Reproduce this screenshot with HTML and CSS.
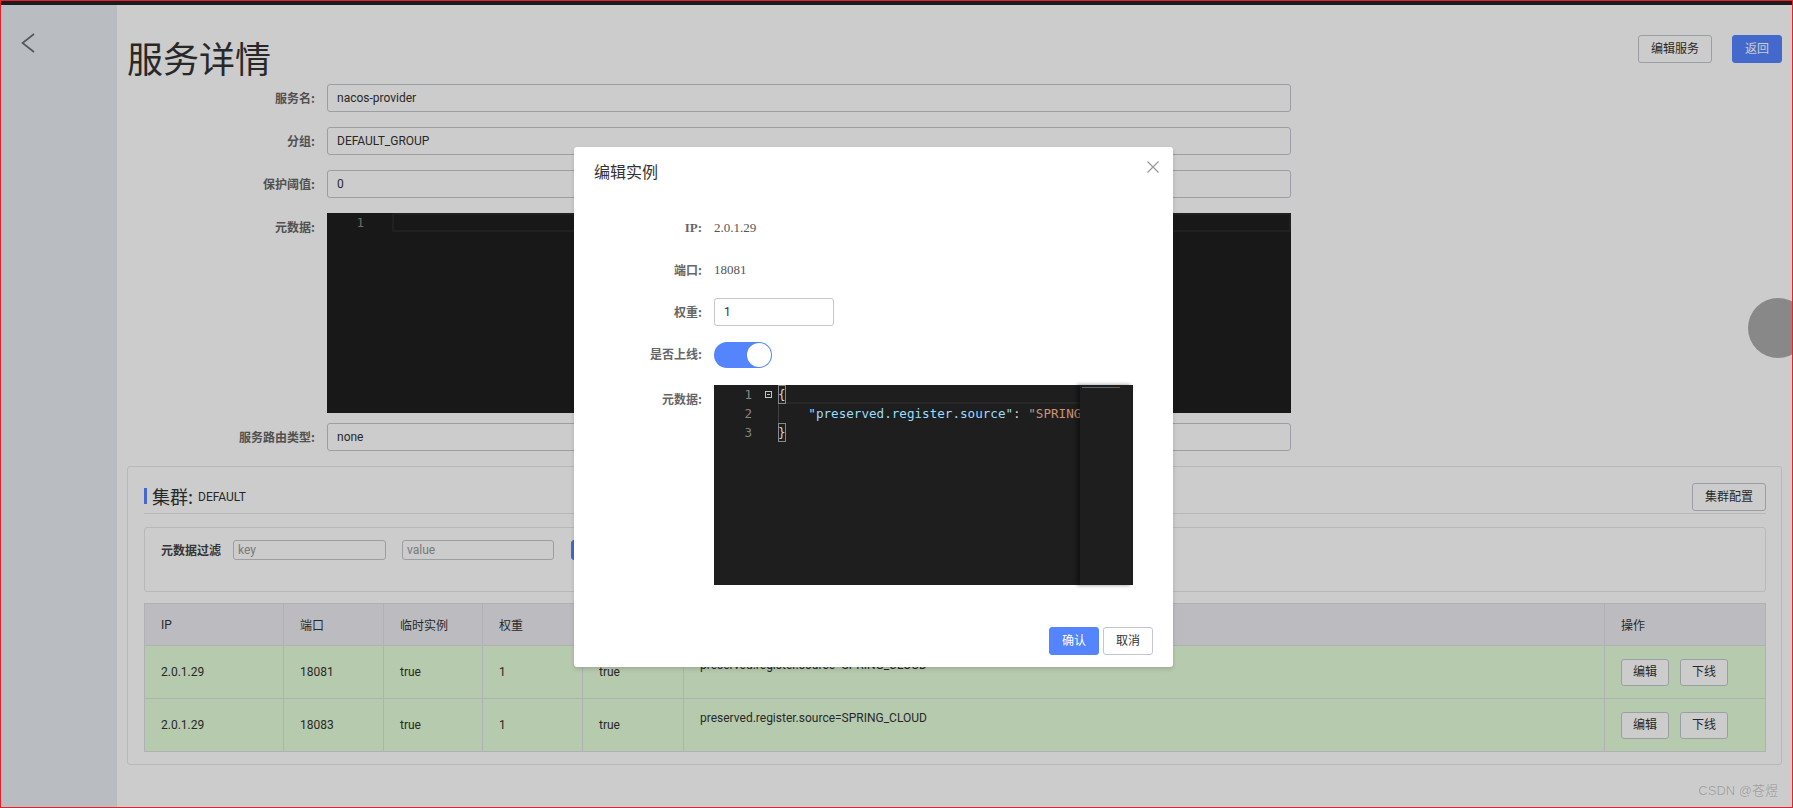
FILE: index.html
```html
<!DOCTYPE html>
<html lang="zh-CN">
<head>
<meta charset="utf-8">
<title>服务详情</title>
<link rel="stylesheet" href="styles.css">
</head>
<body>
<div class="frame">
  <div class="topbar"></div>
  <div class="app">
    <aside class="sidebar">
      <svg class="back" width="14" height="20" viewBox="0 0 14 20"><polyline points="13,1 1.5,10 13,19" fill="none" stroke="#666c75" stroke-width="1.6"/></svg>
    </aside>
    <main class="main">
      <div class="page-head">
        <h1 class="title">服务详情</h1>
        <div class="head-actions">
          <button class="btn">编辑服务</button>
          <button class="btn btn-primary">返回</button>
        </div>
      </div>
      <div class="form">
        <div class="form-row"><div class="form-label">服务名:</div><div class="input">nacos-provider</div></div>
        <div class="form-row"><div class="form-label">分组:</div><div class="input">DEFAULT_GROUP</div></div>
        <div class="form-row"><div class="form-label">保护阈值:</div><div class="input">0</div></div>
        <div class="form-row editor-row">
          <div class="form-label">元数据:</div>
          <div class="page-editor">
            <div class="pe-line"><span class="pe-ln">1</span><span class="pe-cur"></span></div>
          </div>
        </div>
        <div class="form-row last-row"><div class="form-label">服务路由类型:</div><div class="input">none</div></div>
      </div>

      <section class="cluster">
        <div class="cluster-head">
          <span class="cbar"></span>
          <span class="ctitle">集群:</span>
          <span class="cname">DEFAULT</span>
          <button class="btn btn-cfg">集群配置</button>
        </div>
        <div class="filter">
          <span class="filter-label">元数据过滤</span>
          <div class="finput">key</div>
          <div class="finput finput-value">value</div>
          <button class="btn-add">添加过滤</button>
        </div>
        <table class="inst-table">
          <colgroup>
            <col style="width:139px"><col style="width:100px"><col style="width:99px"><col style="width:100px"><col style="width:101px"><col><col style="width:161px">
          </colgroup>
          <thead>
            <tr><th>IP</th><th>端口</th><th>临时实例</th><th>权重</th><th>健康状态</th><th>元数据</th><th>操作</th></tr>
          </thead>
          <tbody>
            <tr>
              <td>2.0.1.29</td><td>18081</td><td>true</td><td>1</td><td>true</td>
              <td class="meta">preserved.register.source=SPRING_CLOUD</td>
              <td><button class="btn btn-sm">编辑</button><button class="btn btn-sm">下线</button></td>
            </tr>
            <tr>
              <td>2.0.1.29</td><td>18083</td><td>true</td><td>1</td><td>true</td>
              <td class="meta">preserved.register.source=SPRING_CLOUD</td>
              <td><button class="btn btn-sm">编辑</button><button class="btn btn-sm">下线</button></td>
            </tr>
          </tbody>
        </table>
      </section>
    </main>
  </div>

  <div class="float-ball"></div>
  <div class="mask"></div>

  <div class="dialog">
    <div class="dlg-head">编辑实例</div>
    <svg class="dlg-close" width="12" height="12" viewBox="0 0 12 12"><path d="M0.5 0.5 L11.5 11.5 M11.5 0.5 L0.5 11.5" stroke="#999" stroke-width="1.2" fill="none"/></svg>
    <div class="dlg-body">
      <div class="dlg-row"><div class="dlg-label serif">IP:</div><div class="dlg-value">2.0.1.29</div></div>
      <div class="dlg-row"><div class="dlg-label">端口:</div><div class="dlg-value">18081</div></div>
      <div class="dlg-row"><div class="dlg-label">权重:</div><div class="weight-input">1</div></div>
      <div class="dlg-row switch-row"><div class="dlg-label">是否上线:</div><div class="switch"><span class="knob"></span></div></div>
      <div class="dlg-row"><div class="dlg-label">元数据:</div>
        <div class="monaco">
          <div class="mc-main">
            <div class="mc-line"><span class="ln">1</span><span class="fold"><svg width="7" height="7" viewBox="0 0 7 7"><rect x="0.5" y="0.5" width="6" height="6" fill="none" stroke="#c5c5c5"/><path d="M2 3.5 H5" stroke="#c5c5c5"/></svg></span><span class="code cur"><span class="brk">{</span></span></div>
            <div class="mc-line"><span class="ln">2</span><span class="fold"></span><span class="code guide">    <span class="k">"preserved.register.source"</span><span class="p">: </span><span class="s">"SPRING_CLOUD"</span></span></div>
            <div class="mc-line"><span class="ln">3</span><span class="fold"></span><span class="code"><span class="brk">}</span></span></div>
          </div>
          <div class="mc-minimap"><div class="mini-line"></div></div>
        </div>
      </div>
    </div>
    <div class="dlg-foot">
      <button class="btn btn-primary">确认</button>
      <button class="btn">取消</button>
    </div>
  </div>

  <div class="watermark">CSDN @苍煜</div>
</div>
</body>
</html>
```

FILE: styles.css
```css
html, body {
  margin: 0;
  padding: 0;
  background: #fff;
}

.frame {
  width: 1793px;
  height: 808px;
  box-sizing: border-box;
  border: 1px solid #e8202a;
  position: relative;
  overflow: hidden;
  display: flex;
  flex-direction: column;
  background: #fff;
  font-family: Roboto, "Noto Sans CJK SC", sans-serif;
  font-size: 12px;
  color: #333;
}

.topbar {
  height: 4px;
  flex: none;
  background: #222428;
}

.app {
  flex: 1;
  display: flex;
  min-height: 0;
}

.sidebar {
  width: 116px;
  flex: none;
  background: #e8ecf0;
  box-sizing: border-box;
  padding: 28px 0 0 20px;
}

.back {
  display: block;
}

.main {
  flex: 1;
  min-width: 0;
  padding: 30px 10px 0 10px;
}

.page-head {
  display: flex;
  justify-content: space-between;
  align-items: flex-start;
  height: 44px;
}

.title {
  margin: 0;
  font-size: 36px;
  font-weight: 400;
  line-height: 44px;
  color: #333;
  font-family: "Noto Sans CJK SC", sans-serif;
}

.head-actions {
  display: flex;
  gap: 20px;
}

.btn {
  height: 28px;
  box-sizing: border-box;
  padding: 0 12px;
  border: 1px solid #c4c6cf;
  border-radius: 3px;
  background: #fff;
  color: #333;
  font-family: Roboto, "Noto Sans CJK SC", sans-serif;
  font-size: 12px;
  line-height: 26px;
  cursor: pointer;
}

.btn-primary {
  background: #5584ff;
  border-color: #5584ff;
  color: #fff;
}

/* form */
.form {
  margin-top: 5px;
}

.form-row {
  display: flex;
  align-items: flex-start;
  margin-bottom: 15px;
}

.form-row.editor-row {
  margin-bottom: 10px;
}

.form-row.last-row {
  margin-bottom: 0;
}

.form-label {
  width: 188px;
  margin-right: 12px;
  text-align: right;
  line-height: 28px;
  font-weight: 700;
  color: #666;
  font-family: "Noto Sans CJK SC", sans-serif;
}

.input {
  width: 964px;
  height: 28px;
  box-sizing: border-box;
  border: 1px solid #c4c6cf;
  border-radius: 3px;
  padding: 0 9px;
  line-height: 26px;
  color: #333;
}

.page-editor {
  width: 964px;
  height: 200px;
  background: #1e1e1e;
  font-family: "DejaVu Sans Mono", monospace;
  font-size: 12.6px;
}

.pe-line {
  display: flex;
  height: 19px;
}

.pe-ln {
  width: 37px;
  text-align: right;
  line-height: 19px;
  color: #858585;
  margin-right: 28px;
}

.pe-cur {
  flex: 1;
  box-sizing: border-box;
  border: 2px solid #282828;
}

/* cluster panel */
.cluster {
  margin-top: 15px;
  border: 1px solid #e6e6e6;
  border-radius: 3px;
  padding: 16px 15px 12px 16px;
}

.cluster-head {
  display: flex;
  align-items: center;
  height: 30px;
  border-bottom: 1px solid #e6e6e6;
}

.cbar {
  width: 3px;
  height: 16px;
  background: #5584ff;
  margin-right: 5px;
  margin-top: -4px;
}

.ctitle {
  font-size: 18px;
  color: #333;
  font-family: "Noto Sans CJK SC", sans-serif;
  margin-top: -4px;
}

.cname {
  font-size: 12px;
  color: #333;
  margin-left: 5px;
  margin-top: -2px;
}

.btn-cfg {
  margin-left: auto;
  margin-top: -2px;
}

.filter {
  margin-top: 13px;
  height: 65px;
  box-sizing: border-box;
  border: 1px solid #e6e6e6;
  border-radius: 3px;
  padding: 12px 16px;
  display: flex;
  align-items: flex-start;
}

.filter-label {
  width: 60px;
  margin-right: 12px;
  line-height: 20px;
  font-weight: 700;
  color: #444;
  font-family: "Noto Sans CJK SC", sans-serif;
}

.finput {
  width: 153px;
  height: 20px;
  box-sizing: border-box;
  border: 1px solid #c4c6cf;
  border-radius: 3px;
  padding: 0 4px;
  line-height: 18px;
  color: #999;
}

.finput-value {
  width: 152px;
  margin-left: 16px;
}

.btn-add {
  margin-left: 17px;
  height: 20px;
  padding: 0 8px;
  border: 1px solid #5584ff;
  border-radius: 3px;
  background: #5584ff;
  color: #fff;
  font-family: Roboto, "Noto Sans CJK SC", sans-serif;
  font-size: 12px;
}

.inst-table {
  margin-top: 11px;
  width: 100%;
  border-collapse: collapse;
  table-layout: fixed;
}

.inst-table th,
.inst-table td {
  border: 1px solid #dcdee3;
  padding: 0 0 0 16px;
  text-align: left;
  font-size: 12px;
  color: #333;
  white-space: nowrap;
  overflow: hidden;
}

.inst-table thead tr {
  height: 42px;
}

.inst-table th {
  background: #ebecf0;
  font-weight: 400;
}

.inst-table tbody tr {
  height: 53px;
}

.inst-table td {
  background: #e4fdda;
  vertical-align: middle;
}

.inst-table td.meta {
  vertical-align: top;
  padding-top: 12px;
}

.btn-sm {
  height: 27px;
  padding: 0 11px;
  line-height: 25px;
  margin-right: 11px;
}

/* overlay elements */
.float-ball {
  position: absolute;
  left: 1747px;
  top: 297px;
  width: 60px;
  height: 60px;
  border-radius: 50%;
  background: #ababab;
}

.mask {
  position: absolute;
  inset: 0;
  background: rgba(0, 0, 0, 0.2);
}

.watermark {
  position: absolute;
  right: 14px;
  bottom: 8px;
  font-size: 13px;
  color: #a3a3a3;
  text-shadow: 0 0 1px #e6e6e6;
  font-family: "Liberation Sans", "Noto Sans CJK SC", sans-serif;
}

/* dialog */
.dialog {
  position: absolute;
  left: 573px;
  top: 146px;
  width: 599px;
  height: 520px;
  box-sizing: border-box;
  background: #fff;
  border-radius: 3px;
  box-shadow: 0 2px 4px rgba(0, 0, 0, 0.15);
}

.dlg-head {
  padding: 12px 20px 0 20px;
  font-size: 16px;
  line-height: 24px;
  color: #333;
  font-family: "Noto Sans CJK SC", sans-serif;
}

.dlg-close {
  position: absolute;
  top: 14px;
  right: 14px;
}

.dlg-body {
  padding: 31px 20px 30px 20px;
}

.dlg-row {
  display: flex;
  align-items: flex-start;
  margin-bottom: 14px;
}

.dlg-row:last-child {
  margin-bottom: 0;
}

.dlg-row.switch-row {
  margin-bottom: 17px;
}

.dlg-label {
  width: 108px;
  margin-right: 12px;
  text-align: right;
  line-height: 28px;
  font-weight: 700;
  color: #666;
  font-family: "Noto Sans CJK SC", sans-serif;
}

.dlg-label.serif {
  font-family: "Liberation Serif", serif;
  font-size: 13px;
}

.dlg-value {
  line-height: 28px;
  color: #555;
  font-family: "Liberation Serif", serif;
  font-size: 13px;
}

.weight-input {
  width: 120px;
  height: 28px;
  box-sizing: border-box;
  border: 1px solid #c4c6cf;
  border-radius: 3px;
  padding: 0 9px;
  line-height: 26px;
  color: #333;
}

.switch {
  position: relative;
  width: 58px;
  height: 26px;
  margin-top: 2px;
  border-radius: 13px;
  background: #5584ff;
}

.knob {
  position: absolute;
  right: 1px;
  top: 1px;
  width: 24px;
  height: 24px;
  border-radius: 50%;
  background: #fff;
}

.monaco {
  display: flex;
  width: 419px;
  height: 200px;
  background: #1e1e1e;
  font-family: "DejaVu Sans Mono", monospace;
  font-size: 12.6px;
}

.mc-main {
  width: 366px;
  overflow: hidden;
}

.mc-line {
  display: flex;
  height: 19px;
  line-height: 19px;
}

.ln {
  width: 38px;
  flex: none;
  text-align: right;
  color: #858585;
}

.fold {
  width: 26px;
  flex: none;
  box-sizing: border-box;
  padding-left: 13px;
  padding-top: 6px;
  line-height: 0;
}

.code {
  flex: 1;
  white-space: pre;
  color: #d4d4d4;
  overflow: hidden;
}

.code.cur {
  box-shadow: inset 0 -2px 0 #282828;
}

.code.guide {
  box-shadow: inset 1px 0 0 #404040;
}

.brk {
  display: inline-block;
  width: 8px;
  height: 19px;
  box-sizing: border-box;
  box-shadow: inset 0 0 0 1px #888;
  color: #d4d4d4;
}

.k { color: #9cdcfe; }
.p { color: #d4d4d4; }
.s { color: #ce9178; }

.mc-minimap {
  width: 53px;
  flex: none;
  background: #1e1e1e;
  box-shadow: -3px 0 4px rgba(0, 0, 0, 0.45);
  padding: 2px 0 0 2px;
  box-sizing: border-box;
}

.mini-line {
  width: 38px;
  height: 1px;
  background: linear-gradient(90deg, #4f6776 0 84%, #7a5644 84% 100%);
}

.dlg-foot {
  display: flex;
  justify-content: flex-end;
  gap: 4px;
  padding: 12px 20px;
}
```
